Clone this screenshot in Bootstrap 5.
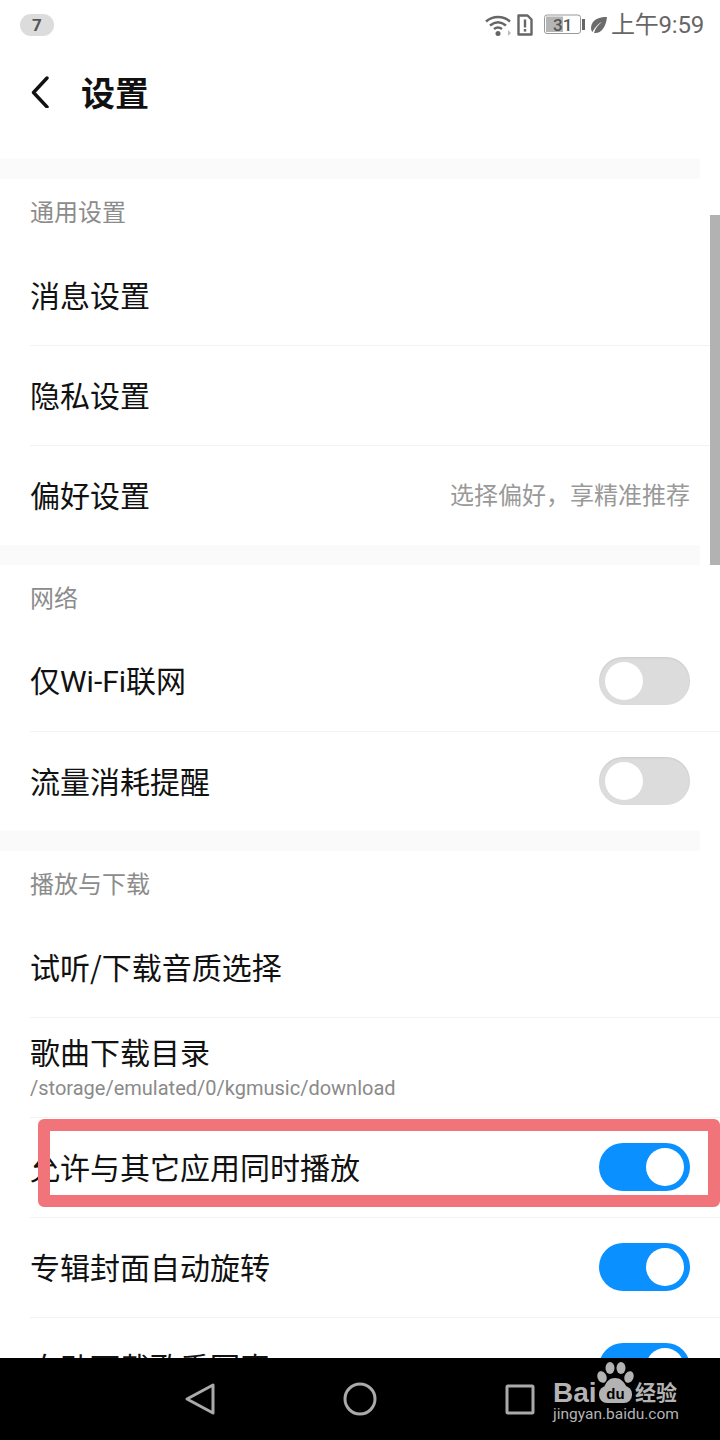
<!DOCTYPE html>
<html lang="zh">
<head>
<meta charset="utf-8">
<title>设置</title>
<link href="https://cdn.jsdelivr.net/npm/bootstrap@5.3.0/dist/css/bootstrap.min.css" rel="stylesheet">
<style>
html,body{height:1440px;overflow:hidden;background:#fff;}
body{font-family:"Noto Sans CJK SC","Noto Sans",sans-serif;color:#111;position:relative;width:720px;}
.statusbar{height:50px;padding:0 16px 0 20px;}
.count-pill{width:34px;height:22px;border-radius:11px;background:#dcdcdc;color:#555;font:700 17px/22px "Roboto",sans-serif;text-align:center;margin-top:-1px;}
.status-time{font-size:24px;line-height:1;color:#666;font-family:"Roboto","Noto Sans CJK SC",sans-serif;letter-spacing:-.2px;margin-left:-1px;}
.titlebar{height:109px;padding:0 30px 26px 30px;gap:31px;}
.titlebar h1{font-size:34px;font-weight:700;margin:0;line-height:1;color:#111;}
.band{height:20px;width:700px;background:#fafafa;}
.group-label{height:67px;padding:20px 30px 0;font-size:24px;color:#8c8c8c;line-height:1;}
.row-item{height:100px;margin-left:30px;padding:0 30px 4px 0;border-bottom:1px solid #f3f3f3;font-size:30px;line-height:1;color:#111;}
.row-item.no-rule{border-bottom:0;height:99px;}
.row-item.two-line{padding-bottom:2px;}
.latin{font-family:"Roboto",sans-serif;}
.mixed-label{margin-top:2px;}
.row-hint{font-size:24px;color:#999;}
.row-path{font:20px/1 "Roboto",sans-serif;color:#8a8a8a;margin-top:12px;}
.toggle-track{width:91px;height:48px;border-radius:24px;background:#dcdcdc;box-shadow:inset 0 1px 2px rgba(0,0,0,.08);padding:5px 0 0 6px;flex:none;margin-top:2px;}
.toggle-knob{width:38px;height:38px;border-radius:50%;background:#fff;}
.toggle-track.is-on{background:#0a90ff;padding:5px 0 0 47px;box-shadow:none;}
.scroll-thumb{position:absolute;left:710px;top:215px;width:10px;height:350px;background:#b2b2b2;}
.callout{position:absolute;left:38px;top:1119px;width:682px;height:88px;border:12px solid #f2747b;border-radius:6px;}
.navbar-bottom{position:absolute;left:0;top:1358px;width:720px;height:82px;background:#000;}
.nav-glyph{position:absolute;top:0;left:0;}
.wm{position:absolute;left:553px;top:22px;width:160px;color:#b3b3b3;}
.wm-main{position:absolute;left:0;top:-1px;font:700 28px/1 "Liberation Sans",sans-serif;}
.wm-cn{position:absolute;left:82px;top:1px;font-size:21px;font-weight:700;line-height:1;white-space:nowrap;}
.wm-url{position:absolute;left:0;top:27px;font:15.500px/1 "Roboto",sans-serif;letter-spacing:0;white-space:nowrap;}
.wm-du{position:absolute;left:46px;top:6px;width:33px;height:17px;background:#b3b3b3;border-radius:8px;color:#000;font:700 15px/16px "Liberation Sans",sans-serif;text-align:center;}
</style>
</head>
<body>
<div class="statusbar d-flex align-items-center justify-content-between">
  <div class="count-pill">7</div>
  <div class="d-flex align-items-center">
    <svg width="28" height="24" viewBox="0 0 28 24" fill="none" stroke="#666" stroke-width="2.4" class="me-1"><path d="M1 8.500C8 2.500 18 2.500 25 8.500"/><path d="M5 12.500C10 8.500 16 8.500 21 12.500"/><path d="M9 16c3-2.300 5-2.300 8 0"/><circle cx="13" cy="20.500" r="2.500" fill="#666" stroke="none"/><path d="M23 17v6l3-3z" fill="#bbb" stroke="none"/></svg>
    <svg width="16" height="22" viewBox="0 0 16 22"><path d="M1.500 1.500h9l4 4v15h-13z" fill="none" stroke="#666" stroke-width="2.400" stroke-linejoin="round"/><rect x="6.800" y="5.500" width="2.400" height="8" fill="#666"/><rect x="6.800" y="15" width="2.400" height="2.600" fill="#666"/></svg>
    <svg width="42" height="22" viewBox="0 0 42 22" style="margin-left:11px"><rect x=".5" y="1" width="36" height="18.500" rx="2.500" fill="#fff" stroke="#999"/><rect x="2" y="2.500" width="17" height="15.500" fill="#b5b5b5"/><text x="9" y="16.500" font-family="Roboto,sans-serif" font-size="17" font-weight="500" fill="#555">31</text><rect x="38" y="5" width="3" height="11" fill="#666"/></svg>
    <svg width="18" height="18" viewBox="0 0 18 18" class="ms-1 me-1"><path d="M17 1C9 1 1.500 3.500 1 12c0 1.500.5 3 1.500 4C6 9.500 9 7.500 12 6 8 9 5.500 12 4 17c7 1 12-6 13-16z" fill="#6b6b6b"/></svg>
    <span class="status-time">上午9:59</span>
  </div>
</div>
<div class="titlebar d-flex align-items-center">
  <svg width="20" height="33" viewBox="0 0 20 33" fill="none" stroke="#111" stroke-width="3.400" stroke-linecap="round" stroke-linejoin="round"><path d="M17 3 3.500 17.500 17 32"/></svg>
  <h1>设置</h1>
</div>
<div class="band"></div>
<div class="group-label">通用设置</div>
<div class="row-item d-flex align-items-center">消息设置</div>
<div class="row-item d-flex align-items-center">隐私设置</div>
<div class="row-item no-rule d-flex align-items-center justify-content-between"><span>偏好设置</span><span class="row-hint">选择偏好，享精准推荐</span></div>
<div class="band"></div>
<div class="group-label">网络</div>
<div class="row-item d-flex align-items-center justify-content-between"><span class="mixed-label">仅<span class="latin">Wi-Fi</span>联网</span><div class="toggle-track"><div class="toggle-knob"></div></div></div>
<div class="row-item no-rule d-flex align-items-center justify-content-between"><span>流量消耗提醒</span><div class="toggle-track"><div class="toggle-knob"></div></div></div>
<div class="band"></div>
<div class="group-label">播放与下载</div>
<div class="row-item d-flex align-items-center">试听/下载音质选择</div>
<div class="row-item two-line d-flex flex-column justify-content-center"><span>歌曲下载目录</span><span class="row-path">/storage/emulated/0/kgmusic/download</span></div>
<div class="row-item d-flex align-items-center justify-content-between"><span>允许与其它应用同时播放</span><div class="toggle-track is-on"><div class="toggle-knob"></div></div></div>
<div class="row-item d-flex align-items-center justify-content-between"><span>专辑封面自动旋转</span><div class="toggle-track is-on"><div class="toggle-knob"></div></div></div>
<div class="row-item d-flex align-items-center justify-content-between"><span>自动下载歌手写真</span><div class="toggle-track is-on"><div class="toggle-knob"></div></div></div>

<div class="scroll-thumb"></div>
<div class="callout"></div>
<div class="navbar-bottom">
  <svg class="nav-glyph" width="540" height="82" viewBox="0 0 540 82" fill="none" stroke="#aaa" stroke-width="3" stroke-linejoin="round">
    <path d="M213 27v28l-26-14z"/>
    <circle cx="360" cy="41" r="15"/>
    <rect x="507" y="28" width="26" height="27" rx="1"/>
  </svg>
  <div class="wm">
    <span class="wm-main">Bai</span>
    <svg style="position:absolute;left:43px;top:-18px" width="38" height="26" viewBox="0 0 38 26" fill="#b3b3b3"><ellipse cx="6" cy="15" rx="4.500" ry="6" transform="rotate(-20 6 15)"/><ellipse cx="14" cy="6" rx="4.500" ry="6"/><ellipse cx="25" cy="6" rx="4.500" ry="6"/><ellipse cx="33" cy="15" rx="4.500" ry="6" transform="rotate(20 33 15)"/><path d="M8 26c2-7 6-10 11-10s9 3 12 10z"/></svg>
    <div class="wm-du">du</div>
    <span class="wm-cn">经验</span>
    <span class="wm-url">jingyan.baidu.com</span>
  </div>
</div>
<script src="https://cdn.jsdelivr.net/npm/bootstrap@5.3.0/dist/js/bootstrap.bundle.min.js"></script>
</body>
</html>
